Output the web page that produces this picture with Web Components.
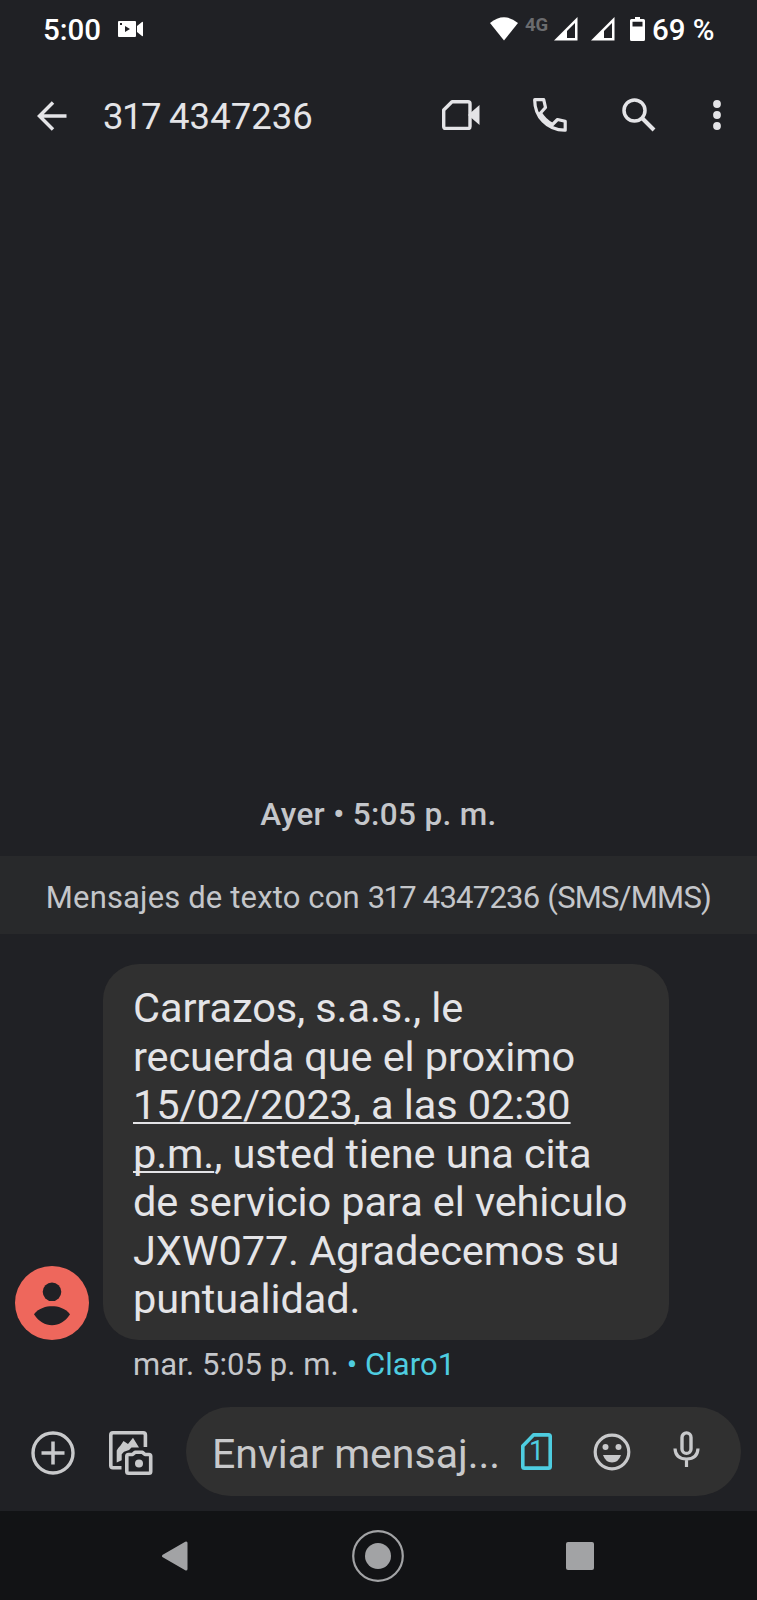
<!DOCTYPE html>
<html lang="es">
<head>
<meta charset="utf-8">
<meta name="viewport" content="width=device-width, initial-scale=1">
<title>317 4347236</title>
<style>
html, body{
    margin: 0;
    background: #202125;
}
body{
    font-family: Roboto, "Liberation Sans", sans-serif;
    color: #e4e4e7;
}
</style>
</head>
<body>
<message-app></message-app>

<script>
// every icon is drawn in px units: [width, height, markup]
const icons = {
    camera: [26, 16, `<path fill="currentColor" fill-rule="evenodd" d="M1 0h16q1 0 1 1v14q0 1-1 1H1q-1 0-1-1V1q0-1 1-1zM7 5v6l5-3zM2 2v2h2V2z"/><path fill="currentColor" d="M19 5l5-4q1-.6 1 .5v13q0 1.100-1 .5l-5-4z"/>`],
    wifi: [28, 24, `<path fill="currentColor" d="M0 6Q14-5.500 28 6L14 23.500z"/>`],
    signal: [24, 24, `<path fill="currentColor" fill-rule="evenodd" d="M23.500 0v23.500H0zM21 6L13 14v7h8z"/>`],
    battery: [15, 24, `<path fill="currentColor" fill-rule="evenodd" d="M5 0h5v2h3.500q1.500 0 1.500 1.500v19q0 1.500-1.500 1.500h-12Q0 24 0 22.500v-19Q0 2 1.500 2H5zM2.500 4.800v4.700h10V4.800z"/>`],
    back: [30, 30, `<path fill="none" stroke="currentColor" stroke-width="3.500" d="M29.500 15H3M16 1.500L2.500 15 16 28.500"/>`],
    video: [38, 30, `<path fill="none" stroke="currentColor" stroke-width="3.400" stroke-linejoin="round" d="M10 1.700h16q2 0 2 2v22.800q0 2-2 2H3.700q-2 0-2-2V10z"/><path fill="currentColor" d="M26 15L37.500 5v20z"/>`],
    phone: [34, 34, `<path fill="none" stroke="currentColor" stroke-width="3.200" stroke-linejoin="round" d="M1.700 1.700h9L12.500 9.500l-5 5.500Q11.500 22 19.500 26.500l5-5 7.700 1.800v8.900C14 32.500 1.500 18 1.700 1.700z"/>`],
    search: [34, 34, `<circle cx="12.500" cy="12.500" r="10.500" fill="none" stroke="currentColor" stroke-width="3.500"/><path stroke="currentColor" stroke-width="4" d="M20.500 20.500L32 32"/>`],
    more: [8, 30, `<g fill="currentColor"><circle cx="4" cy="4" r="3.900"/><circle cx="4" cy="15" r="3.900"/><circle cx="4" cy="26" r="3.900"/></g>`],
    person: [74, 74, `<circle cx="37" cy="37" r="37" fill="#ee675c"/><circle cx="37" cy="25.800" r="9.300" fill="#202125"/><path fill="#202125" d="M19 48.300C24 42 31 40.300 37 40.300S50 42 55 48.300C50 56 44 59.200 37 59.200S24 56 19 48.300z"/>`],
    plus: [44, 44, `<circle cx="22" cy="22" r="20" fill="none" stroke="currentColor" stroke-width="3.400"/><path stroke="currentColor" stroke-width="3.500" d="M22 10.500v23M10.500 22h23"/>`],
    gallery: [44, 44, `<path fill="none" stroke="currentColor" stroke-width="3.600" stroke-linejoin="round" d="M12.500 36.800H4q-2.200 0-2.200-2.200V4q0-2.200 2.200-2.200h30.200q2.200 0 2.200 2.200v12"/><path fill="currentColor" d="M7.700 31.500V19.500Q8.500 17.500 11.500 14.500L14.500 10l4.500 3L24 6.700 30 16.500h-7.500L20 19l-5 1.700-2.300 2.500v6z"/><path fill="none" stroke="currentColor" stroke-width="3.600" stroke-linejoin="round" d="M19.500 23.500h4l2.500-2.200h7.500l2.500 2.200h4q1.700 0 1.700 1.700v15.300q0 1.700-1.700 1.700H19.500q-1.700 0-1.700-1.700V25.200q0-1.700 1.700-1.700z"/><circle cx="30" cy="32.500" r="4" fill="currentColor"/>`],
    sim: [31, 37, `<path fill="none" stroke="currentColor" stroke-width="3.600" stroke-linejoin="round" d="M12.500 1.900h15q1.700 0 1.700 1.700v29.800q0 1.700-1.700 1.700H3.500q-1.700 0-1.700-1.700V13z"/>`],
    smile: [38, 38, `<circle cx="19" cy="19" r="16.800" fill="none" stroke="currentColor" stroke-width="3.200"/><g fill="currentColor"><circle cx="12.500" cy="14" r="3"/><circle cx="25.500" cy="14" r="3"/><path d="M10 22h18q-2.500 7.500-9 7.500T10 22z"/></g>`],
    mic: [27, 37, `<rect x="9" y="1.900" width="9" height="20.500" rx="4.500" fill="none" stroke="currentColor" stroke-width="3.400"/><path fill="none" stroke="currentColor" stroke-width="3.200" d="M2 17.500q.5 10.500 11.500 10.500T25 17.500M13.500 28v8"/>`],
    navback: [28, 32, `<path fill="currentColor" stroke="currentColor" stroke-width="3" stroke-linejoin="round" d="M2.500 16L25 3v26z"/>`],
    home: [54, 54, `<circle cx="27" cy="27" r="24.800" fill="none" stroke="currentColor" stroke-width="2.200"/><circle cx="27" cy="27" r="13" fill="currentColor"/>`],
    recent: [28, 28, `<rect width="28" height="28" rx="2" fill="currentColor"/>`]
};

function defineElement(name, css, html){
    const template = document.createElement("template");
    template.innerHTML = `<style>${css}</style>${html}`;
    customElements.define(name, class extends HTMLElement{
        constructor(){
            super();
            this.attachShadow({mode: "open"});
            this.shadowRoot.appendChild(template.content.cloneNode(true));
        }
    });
}

class UiIcon extends HTMLElement{
    constructor(){
        super();
        this.attachShadow({mode: "open"});
    }

    connectedCallback(){
        this.render();
    }

    render(){
        const [w, h, body] = icons[this.getAttribute("name")];
        this.shadowRoot.innerHTML = `
        <style>
        :host{ display: block; flex: none; }
        svg{ display: block; }
        </style>
        <svg width="${w}" height="${h}" viewBox="0 0 ${w} ${h}">${body}</svg>`;
    }
}
customElements.define("ui-icon", UiIcon);

defineElement("status-bar", `
:host{
    display: flex;
    align-items: center;
    box-sizing: border-box;
    height: 58px;
    padding: 0 44px 0 43px;
    color: #fff;
    font-size: 29.500px;
    font-weight: 500;
    line-height: 60px;
    white-space: nowrap;
}
.time{ width: 75px; padding-top: 2px; }
.right{ display: flex; align-items: center; margin-left: auto; }
.net{ color: #6b6c6f; font-size: 18.500px; font-weight: 700; line-height: 20px; margin: 0 4px 9px 7px; width: 25px; }
.second{ margin: 0 15px 0 13px; }
.level{ margin-left: 7px; width: 61px; padding-top: 2px; }
`, `
<span class="time">5:00</span><ui-icon name="camera"></ui-icon>
<div class="right">
    <ui-icon name="wifi"></ui-icon><span class="net">4G</span>
    <ui-icon name="signal"></ui-icon><ui-icon class="second" name="signal"></ui-icon>
    <ui-icon name="battery"></ui-icon><span class="level">69 %</span>
</div>`);

defineElement("conversation-header", `
:host{
    display: flex;
    align-items: center;
    box-sizing: border-box;
    height: 116px;
    padding: 0 36px 0 37px;
}
h1{
    margin: 0 auto 0 36px;
    padding-top: 2px;
    font-size: 36.500px;
    font-weight: 400;
    line-height: 44px;
    white-space: nowrap;
}
::slotted(.prefix){ letter-spacing: -1.500px; }
.actions{ display: flex; align-items: center; padding-bottom: 2px; }
.phone{ margin-left: 53px; }
.search{ margin-left: 55px; }
.more{ margin-left: 57px; }
`, `
<ui-icon name="back"></ui-icon>
<h1><slot></slot></h1>
<div class="actions">
    <ui-icon name="video"></ui-icon><ui-icon class="phone" name="phone"></ui-icon>
    <ui-icon class="search" name="search"></ui-icon><ui-icon class="more" name="more"></ui-icon>
</div>`);

defineElement("thread-date", `
:host{
    display: block;
    padding-bottom: 19px;
    color: #c4c6ca;
    font-size: 31.500px;
    font-weight: 500;
    letter-spacing: .35px;
    line-height: 44px;
    text-align: center;
    white-space: nowrap;
}`, `<slot></slot>`);

defineElement("thread-notice", `
:host{
    display: block;
    height: 78px;
    background: #28292b;
    color: #c4c6ca;
    font-size: 31px;
    letter-spacing: .15px;
    line-height: 84px;
    text-align: center;
    white-space: nowrap;
}
::slotted(.prefix){ letter-spacing: -1.700px; }
::slotted(.number){ letter-spacing: -.75px; }
::slotted(.kind){ letter-spacing: -.75px; }
`, `<slot></slot>`);

defineElement("message-bubble", `
:host{
    display: grid;
    grid-template-columns: 74px 566px;
    column-gap: 14px;
    align-items: end;
    padding: 30px 0 0 15px;
}
.bubble{
    box-sizing: border-box;
    height: 376px;
    padding: 20px 30px;
    border-radius: 36px;
    background: #303030;
    font-size: 41.500px;
    letter-spacing: -.1px;
    line-height: 48.500px;
}
.meta{
    grid-column: 2;
    padding: 3px 0 0 30px;
    color: #c4c6ca;
    font-size: 31px;
    letter-spacing: .08px;
    line-height: 44px;
    white-space: nowrap;
}
`, `
<ui-icon name="person"></ui-icon>
<div class="bubble"><slot></slot></div>
<div class="meta"><slot name="meta"></slot></div>`);

defineElement("compose-bar", `
:host{
    display: flex;
    align-items: center;
    box-sizing: border-box;
    height: 124px;
    padding: 20px 16px 15px 31px;
    margin-top: auto;
    color: #c8c9cb;
}
.plus, .gallery{ padding-top: 2px; }
.gallery{ margin: 0 33px 0 34px; }
.field{
    flex: 1;
    display: flex;
    align-items: center;
    box-sizing: border-box;
    height: 89px;
    padding: 0 41px 0 26px;
    border-radius: 45px;
    background: #303030;
}
.hint{ margin-right: auto; padding-top: 4px; font-size: 41px; line-height: 50px; white-space: nowrap; }
.sim{ display: grid; place-items: center; margin-right: 41px; color: #4ecde0; font-size: 27px; line-height: 37px; }
.sim > *{ grid-area: 1 / 1; }
.smile{ margin-right: 42px; }
.mic{ padding-bottom: 4px; }
`, `
<ui-icon class="plus" name="plus"></ui-icon><ui-icon class="gallery" name="gallery"></ui-icon>
<div class="field">
    <span class="hint"><slot></slot></span>
    <div class="sim"><ui-icon name="sim"></ui-icon><span>1</span></div>
    <ui-icon class="smile" name="smile"></ui-icon><ui-icon class="mic" name="mic"></ui-icon>
</div>`);

defineElement("nav-bar", `
:host{
    display: grid;
    grid-template-columns: 351px 54px 1fr;
    align-items: center;
    height: 89px;
    background: #121315;
    color: #a2a3a5;
}
.back{ justify-self: end; margin-right: 162px; }
.recent{ margin-left: 161px; }
`, `
<ui-icon class="back" name="navback"></ui-icon><ui-icon name="home"></ui-icon><ui-icon class="recent" name="recent"></ui-icon>`);

defineElement("message-app", `
:host{
    display: flex;
    flex-direction: column;
    height: 1600px;
    overflow: hidden;
    background: #202125;
}
thread-date{ margin-top: 619px; }
u{ text-decoration-thickness: 2px; text-underline-offset: 3px; text-decoration-skip-ink: none; }
.sim-name{ color: #4ecde0; }
`, `
<status-bar></status-bar>
<conversation-header><span class="prefix">317</span> 4347236</conversation-header>
<thread-date><span>Ayer • 5:05 p. m.</span></thread-date>
<thread-notice>Mensajes de texto con <span class="prefix">317</span> <span class="number">4347236</span> <span class="kind">(SMS/MMS)</span></thread-notice>
<message-bubble>Carrazos, s.a.s., le<br>recuerda que el proximo<br><u>15/02/2023, a las 02:30</u><br><u>p.m.</u>, usted tiene una cita<br>de servicio para el vehiculo<br>JXW077. Agradecemos su<br>puntualidad.
    <span slot="meta">mar. 5:05 p. m. <span class="sim-name">• Claro1</span></span>
</message-bubble>
<compose-bar>Enviar mensaj...</compose-bar>
<nav-bar></nav-bar>`);
</script>
</body>
</html>
